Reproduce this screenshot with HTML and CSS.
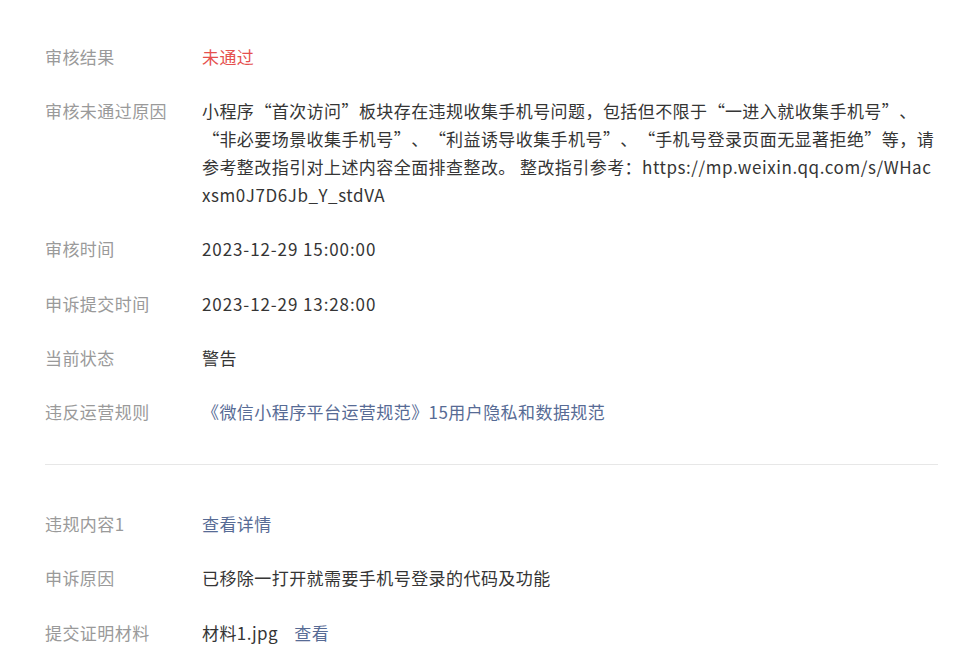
FILE: index.html
```html
<!DOCTYPE html>
<html lang="zh-CN">
<head>
  <meta charset="UTF-8">
  <meta name="viewport" content="width=device-width, initial-scale=1.0">
  <title>申诉详情</title>
  <link rel="stylesheet" href="styles.css">
</head>
<body>
  <div class="container">
    <div class="info-section">
      <div class="row">
        <span class="label">审核结果</span>
        <span class="value fail">未通过</span>
      </div>
      <div class="row">
        <span class="label">审核未通过原因</span>
        <span class="value reason">小程序<span class="nw"><span class="qo">“</span>首次访问<span class="qc">”</span></span>板块存在违规收集手机号问题，包括但不限于<span class="nw"><span class="qo">“</span>一进入就收集手机号<span class="qc">”</span>、</span><span class="nw"><span class="qo">“</span>非必要场景收集手机号<span class="qc">”</span>、</span><span class="nw"><span class="qo">“</span>利益诱导收集手机号<span class="qc">”</span>、</span><span class="nw"><span class="qo">“</span>手机号登录页面无显著拒绝<span class="qc">”</span>等，</span>请参考整改指引对上述内容全面排查整改。 整改指引参考：<span class="url">https://mp.weixin.qq.com/s/WHacxsm0J7D6Jb_Y_stdVA</span></span>
      </div>
      <div class="row">
        <span class="label">审核时间</span>
        <span class="value num">2023-12-29 15:00:00</span>
      </div>
      <div class="row">
        <span class="label">申诉提交时间</span>
        <span class="value num">2023-12-29 13:28:00</span>
      </div>
      <div class="row">
        <span class="label">当前状态</span>
        <span class="value">警告</span>
      </div>
      <div class="row">
        <span class="label">违反运营规则</span>
        <a class="value link" href="#">《微信小程序平台运营规范》15用户隐私和数据规范</a>
      </div>
    </div>

    <div class="info-section second">
      <div class="row">
        <span class="label">违规内容1</span>
        <a class="value link" href="#">查看详情</a>
      </div>
      <div class="row">
        <span class="label">申诉原因</span>
        <span class="value">已移除一打开就需要手机号登录的代码及功能</span>
      </div>
      <div class="row">
        <span class="label">提交证明材料</span>
        <span class="value">材料1.jpg <a class="link view" href="#">查看</a></span>
      </div>
    </div>
  </div>
</body>
</html>
```

FILE: styles.css
```css
body {
  font-family: "Noto Sans CJK SC", "Noto Sans", sans-serif;
  margin: 0;
  background-color: #ffffff;
  color: #353535;
}

.container {
  padding: 30px 25px 0 45px;
}

.info-section {
  padding-bottom: 25px;
  border-bottom: 1px solid #e7e7e7;
}

.info-section.second {
  border-bottom: none;
  padding-top: 32px;
}

.row {
  display: flex;
  font-size: 17px;
  letter-spacing: 0.43px;
  line-height: 28px;
  padding: 13.1px 0;
}

.label {
  flex: 0 0 157px;
  color: #9a9a9a;
}

.value {
  flex: 1;
  color: #353535;
}

.num {
  letter-spacing: 0.9px;
}

.reason {
  word-break: break-all;
}

.url {
  letter-spacing: 0.56px;
}

/* keep quoted phrases together, quotes drawn full width */
.nw {
  white-space: nowrap;
}

.qo,
.qc {
  display: inline-block;
  width: 17.43px;
  letter-spacing: 0;
}

.qo {
  text-align: right;
}

.qc {
  text-align: left;
}

.fail {
  color: #e5504e;
}

.link {
  color: #576b95;
  text-decoration: none;
}

.view {
  margin-left: 12px;
}
```
